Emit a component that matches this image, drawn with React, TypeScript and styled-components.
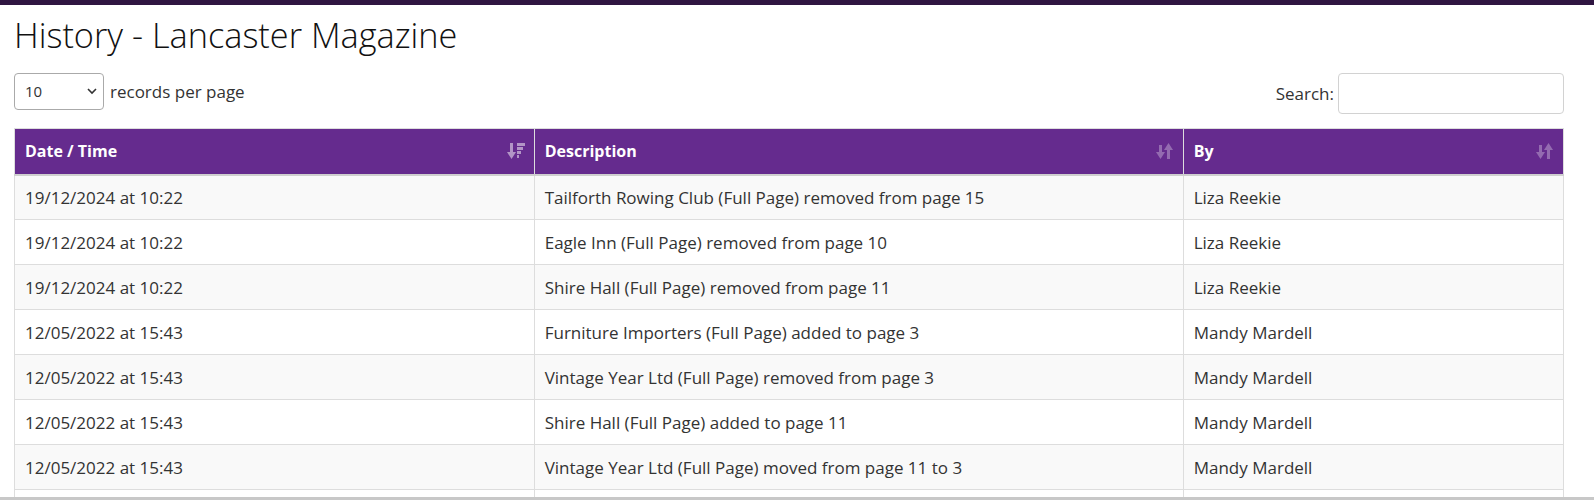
import React from "react";
import styled, { createGlobalStyle } from "styled-components";

const Global = createGlobalStyle`
  html, body { margin: 0; padding: 0; overflow: hidden; background: #fff; }
  body { font-family: "Open Sans", "Noto Sans", sans-serif; color: #333; }
  * { box-sizing: border-box; }
`;

const TopBar = styled.div`
  height: 5px;
  background: #2f1541;
`;

const Page = styled.div`
  padding: 0 30px 0 14px;
  height: 495px;
  overflow: hidden;
  border-bottom: 3px solid #c8c8c8;
`;

const Title = styled.h1`
  margin: 7px 0 0 0;
  font-size: 34.3px;
  font-weight: 300;
  line-height: 46px;
  color: #111;
`;

const Controls = styled.div`
  display: flex;
  justify-content: space-between;
  align-items: center;
  margin-top: 15px;
  height: 40px;
`;

const Length = styled.label`
  display: flex;
  align-items: center;
  gap: 6px;
  font-size: 17px;
  color: #333;
  margin-top: -4px;
`;

const SelectBox = styled.div`
  position: relative;
  width: 90px;
  height: 37px;
  border: 1px solid #aaa;
  border-radius: 4px;
  display: flex;
  align-items: center;
  padding-left: 10px;
  font-size: 15px;
  color: #333;
  background: #fff;
`;

const Chevron = styled.svg`
  position: absolute;
  right: 6px;
  top: 14px;
`;

const SearchLabel = styled.label`
  display: flex;
  align-items: center;
  gap: 4px;
  font-size: 17px;
  color: #333;
`;

const SearchInput = styled.div`
  width: 226px;
  height: 41px;
  border: 1px solid #d2d2d2;
  border-radius: 4px;
  background: #fff;
`;

const Table = styled.table`
  margin-top: 15px;
  width: 100%;
  border-collapse: collapse;
  table-layout: fixed;
  font-size: 17px;
`;

const Th = styled.th<{ $w: string }>`
  width: ${(p) => p.$w};
  background: #652b8e;
  color: #fff;
  text-align: left;
  font-weight: 700;
  font-size: 16px;
  height: 46px;
  padding: 0 10px;
  border: 1px solid #ddd;
  border-bottom: 2px solid #cfcfcf;
  position: relative;
`;

const SortIcon = styled.svg<{ $dim?: boolean }>`
  position: absolute;
  right: 9px;
  top: 13px;
  opacity: ${(p) => (p.$dim ? 0.3 : 0.5)};
`;

const Tr = styled.tr<{ $odd: boolean }>`
  background: ${(p) => (p.$odd ? "#f9f9f9" : "#fff")};
`;

const Td = styled.td`
  height: 45px;
  padding: 0 10px;
  border: 1px solid #ddd;
  color: #333;
  white-space: nowrap;
`;

const rows: [string, string, string][] = [
  ["19/12/2024 at 10:22", "Tailforth Rowing Club (Full Page) removed from page 15", "Liza Reekie"],
  ["19/12/2024 at 10:22", "Eagle Inn (Full Page) removed from page 10", "Liza Reekie"],
  ["19/12/2024 at 10:22", "Shire Hall (Full Page) removed from page 11", "Liza Reekie"],
  ["12/05/2022 at 15:43", "Furniture Importers (Full Page) added to page 3", "Mandy Mardell"],
  ["12/05/2022 at 15:43", "Vintage Year Ltd (Full Page) removed from page 3", "Mandy Mardell"],
  ["12/05/2022 at 15:43", "Shire Hall (Full Page) added to page 11", "Mandy Mardell"],
  ["12/05/2022 at 15:43", "Vintage Year Ltd (Full Page) moved from page 11 to 3", "Mandy Mardell"],
  ["", "", ""],
];

const SortDesc = () => (
  <SortIcon width="18" height="18" viewBox="0 0 18 18" fill="#fff">
    <rect x="3" y="1" width="3" height="11" />
    <polygon points="0,10 9,10 4.5,17" />
    <rect x="10" y="1" width="8" height="3" />
    <rect x="10" y="5" width="6" height="3" />
    <rect x="10" y="9" width="4" height="3" />
    <rect x="10" y="13" width="2" height="3" />
  </SortIcon>
);

const SortBoth = () => (
  <SortIcon $dim width="18" height="18" viewBox="0 0 18 18" fill="#fff">
    <rect x="3" y="3" width="3" height="9" />
    <polygon points="0,10 9,10 4.5,17" />
    <rect x="11" y="6" width="3" height="11" />
    <polygon points="8,8 17,8 12.5,1" />
  </SortIcon>
);

export default function App() {
  return (
    <>
      <Global />
      <TopBar />
      <Page>
        <Title>History - Lancaster Magazine</Title>
        <Controls>
          <Length>
            <SelectBox>
              10
              <Chevron width="10" height="7" viewBox="0 0 10 7">
                <path d="M1 1 L5 5 L9 1" stroke="#333" strokeWidth="1.6" fill="none" />
              </Chevron>
            </SelectBox>
            records per page
          </Length>
          <SearchLabel>
            Search:
            <SearchInput />
          </SearchLabel>
        </Controls>
        <Table>
          <thead>
            <tr>
              <Th $w="33.55%">Date / Time<SortDesc /></Th>
              <Th $w="41.9%">Description<SortBoth /></Th>
              <Th $w="24.55%">By<SortBoth /></Th>
            </tr>
          </thead>
          <tbody>
            {rows.map((r, i) => (
              <Tr key={i} $odd={i % 2 === 0}>
                <Td>{r[0]}</Td>
                <Td>{r[1]}</Td>
                <Td>{r[2]}</Td>
              </Tr>
            ))}
          </tbody>
        </Table>
      </Page>
    </>
  );
}
